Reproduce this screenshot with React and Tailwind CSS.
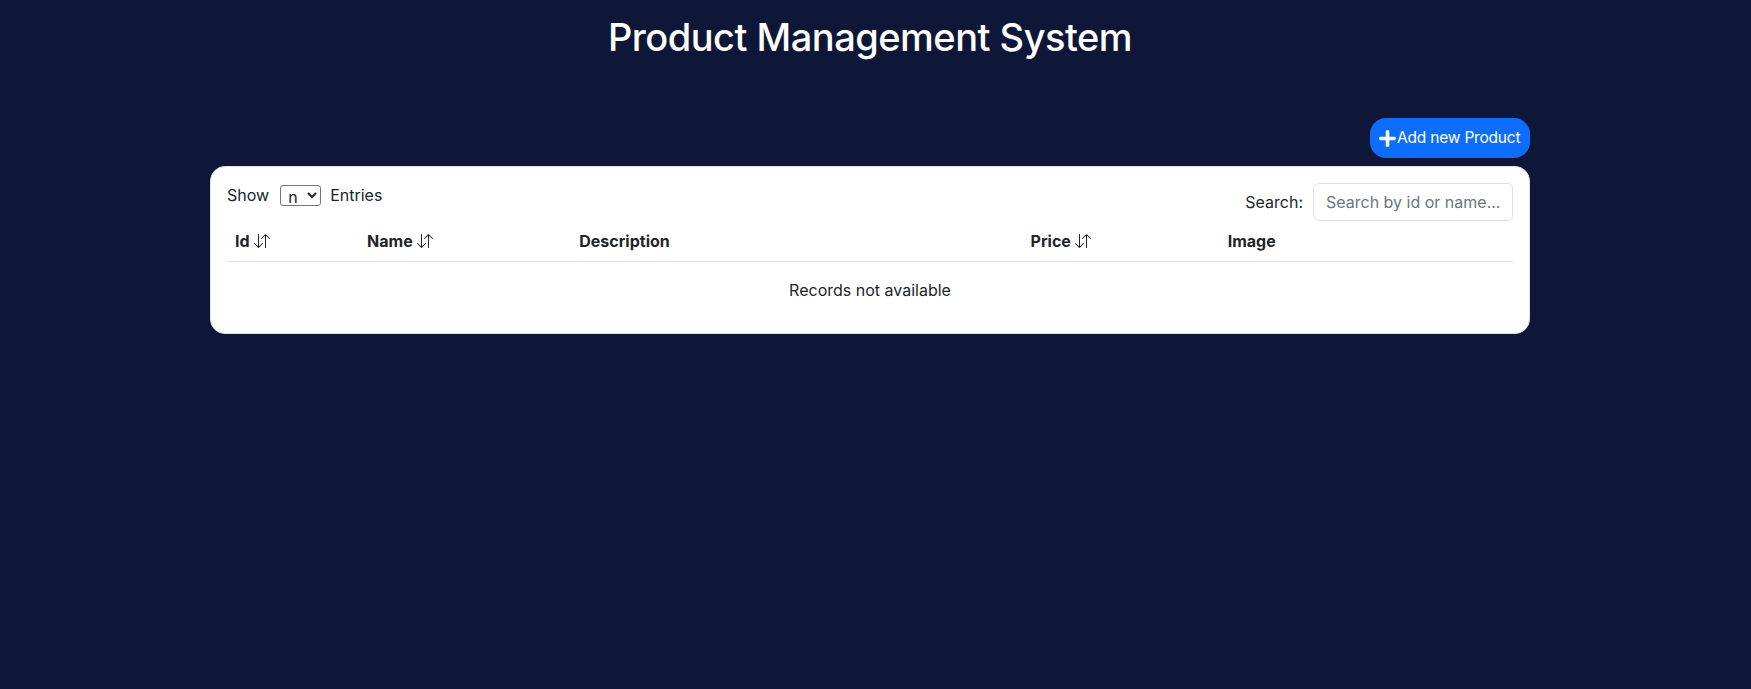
import React from 'react';
import { BsArrowDownUp } from 'react-icons/bs';
import { FaPlus } from 'react-icons/fa';

const columns = [
    { label: 'Id', sortable: true, width: 'w-[132px]' },
    { label: 'Name', sortable: true, width: 'w-[212px]' },
    { label: 'Description', sortable: false, width: 'w-[451px]' },
    { label: 'Price', sortable: true, width: 'w-[197px]' },
    { label: 'Image', sortable: false, width: 'w-[293px]' },
];

export default function App() {
    return (
        <div className="min-h-[689px] w-full bg-[#0e1737] font-['Inter','Liberation_Sans',sans-serif] text-[#212529] pr-[11px]">
            {/* Title */}
            <h1 className="pt-[14px] text-center text-[38px] font-medium leading-[46px] tracking-[-0.5px] text-white">
                Product Management System
            </h1>

            <div className="w-[1320px] mx-auto mt-[58px]">
                {/* Add button */}
                <div className="flex justify-end mb-2">
                    <button className="flex items-center h-10 w-[160px] pl-2 rounded-[16px] bg-[#0d6efd] text-white text-[15.5px] tracking-[-0.2px]">
                        <FaPlus size={19} />
                        <span>Add new Product</span>
                    </button>
                </div>

                {/* Card */}
                <div className="bg-white border border-[#dee2e6] rounded-[15px] px-4 pt-4 pb-4">
                    <div className="flex justify-between">
                        <div className="flex items-center h-6 text-[16px]">
                            <span>Show</span>
                            <select className="ml-[11px] mr-[9px] h-[21px] w-[41px] border border-[#767676] rounded-[3px] text-[16px] leading-none pl-[3px]">
                                <option>n</option>
                            </select>
                            <span>Entries</span>
                        </div>
                        <div className="flex items-center gap-[10px]">
                            <label className="text-[16px]">Search:</label>
                            <input
                                type="text"
                                placeholder="Search by id or name..."
                                className="w-[200px] h-[38px] border border-[#dee2e6] rounded-[6px] px-3 text-[16px] placeholder:text-[#6c757d] outline-none"
                            />
                        </div>
                    </div>

                    <table className="w-full table-fixed border-collapse">
                        <thead>
                            <tr className="border-b border-[#dee2e6]">
                                {columns.map((col) => (
                                    <th key={col.label} className={`${col.width} text-left font-bold text-[16px] leading-6 p-2`}>
                                        <span className="inline-flex items-center gap-[4px]">
                                            {col.label}
                                            {col.sortable && <BsArrowDownUp size={16} />}
                                        </span>
                                    </th>
                                ))}
                            </tr>
                        </thead>
                        <tbody>
                            <tr>
                                <td colSpan={5} className="text-center text-[16px] leading-6 px-2 pt-[16px] pb-[15px]">
                                    Records not available
                                </td>
                            </tr>
                        </tbody>
                    </table>
                </div>
            </div>
        </div>
    );
}
